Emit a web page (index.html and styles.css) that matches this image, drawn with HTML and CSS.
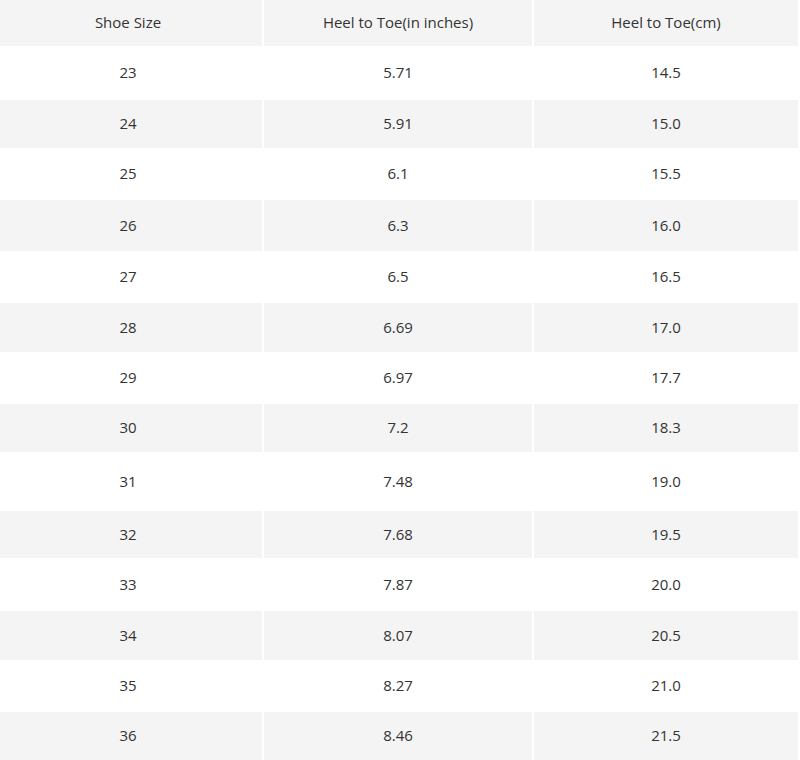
FILE: index.html
```html
<!DOCTYPE html>
<html>
<head>
<meta charset="utf-8">
<link rel="stylesheet" href="styles.css">
</head>
<body>
<div class="table">
  <div class="row alt"><div class="cell">Shoe Size</div><div class="cell">Heel to Toe(in inches)</div><div class="cell">Heel to Toe(cm)</div></div>
  <div class="row"><div class="cell">23</div><div class="cell">5.71</div><div class="cell">14.5</div></div>
  <div class="row alt"><div class="cell">24</div><div class="cell">5.91</div><div class="cell">15.0</div></div>
  <div class="row"><div class="cell">25</div><div class="cell">6.1</div><div class="cell">15.5</div></div>
  <div class="row alt"><div class="cell">26</div><div class="cell">6.3</div><div class="cell">16.0</div></div>
  <div class="row"><div class="cell">27</div><div class="cell">6.5</div><div class="cell">16.5</div></div>
  <div class="row alt"><div class="cell">28</div><div class="cell">6.69</div><div class="cell">17.0</div></div>
  <div class="row"><div class="cell">29</div><div class="cell">6.97</div><div class="cell">17.7</div></div>
  <div class="row alt"><div class="cell">30</div><div class="cell">7.2</div><div class="cell">18.3</div></div>
  <div class="row"><div class="cell">31</div><div class="cell">7.48</div><div class="cell">19.0</div></div>
  <div class="row alt"><div class="cell">32</div><div class="cell">7.68</div><div class="cell">19.5</div></div>
  <div class="row"><div class="cell">33</div><div class="cell">7.87</div><div class="cell">20.0</div></div>
  <div class="row alt"><div class="cell">34</div><div class="cell">8.07</div><div class="cell">20.5</div></div>
  <div class="row"><div class="cell">35</div><div class="cell">8.27</div><div class="cell">21.0</div></div>
  <div class="row alt"><div class="cell">36</div><div class="cell">8.46</div><div class="cell">21.5</div></div>
</div>
</body>
</html>
```

FILE: styles.css
```css
html, body {
  margin: 0;
  padding: 0;
  background: #ffffff;
}

body {
  font-family: "Open Sans", "Liberation Sans", sans-serif;
  font-size: 15px;
  color: #333333;
}

.table {
  width: 798px;
  display: grid;
  grid-template-columns: 262px 268px 264px;
  grid-template-rows: 46px 54px 48px 52px 51px 52px 49px 52px 48px 59px 47px 53px 49px 52px 48px;
  column-gap: 2px;
  overflow: hidden;
  height: 760px;
}

.row {
  display: contents;
}

.cell {
  display: flex;
  align-items: center;
  justify-content: center;
  white-space: nowrap;
  padding-bottom: 2px;
}

.cell:first-child {
  padding-right: 6px;
}

.alt .cell {
  background: #f4f4f4;
}
```
